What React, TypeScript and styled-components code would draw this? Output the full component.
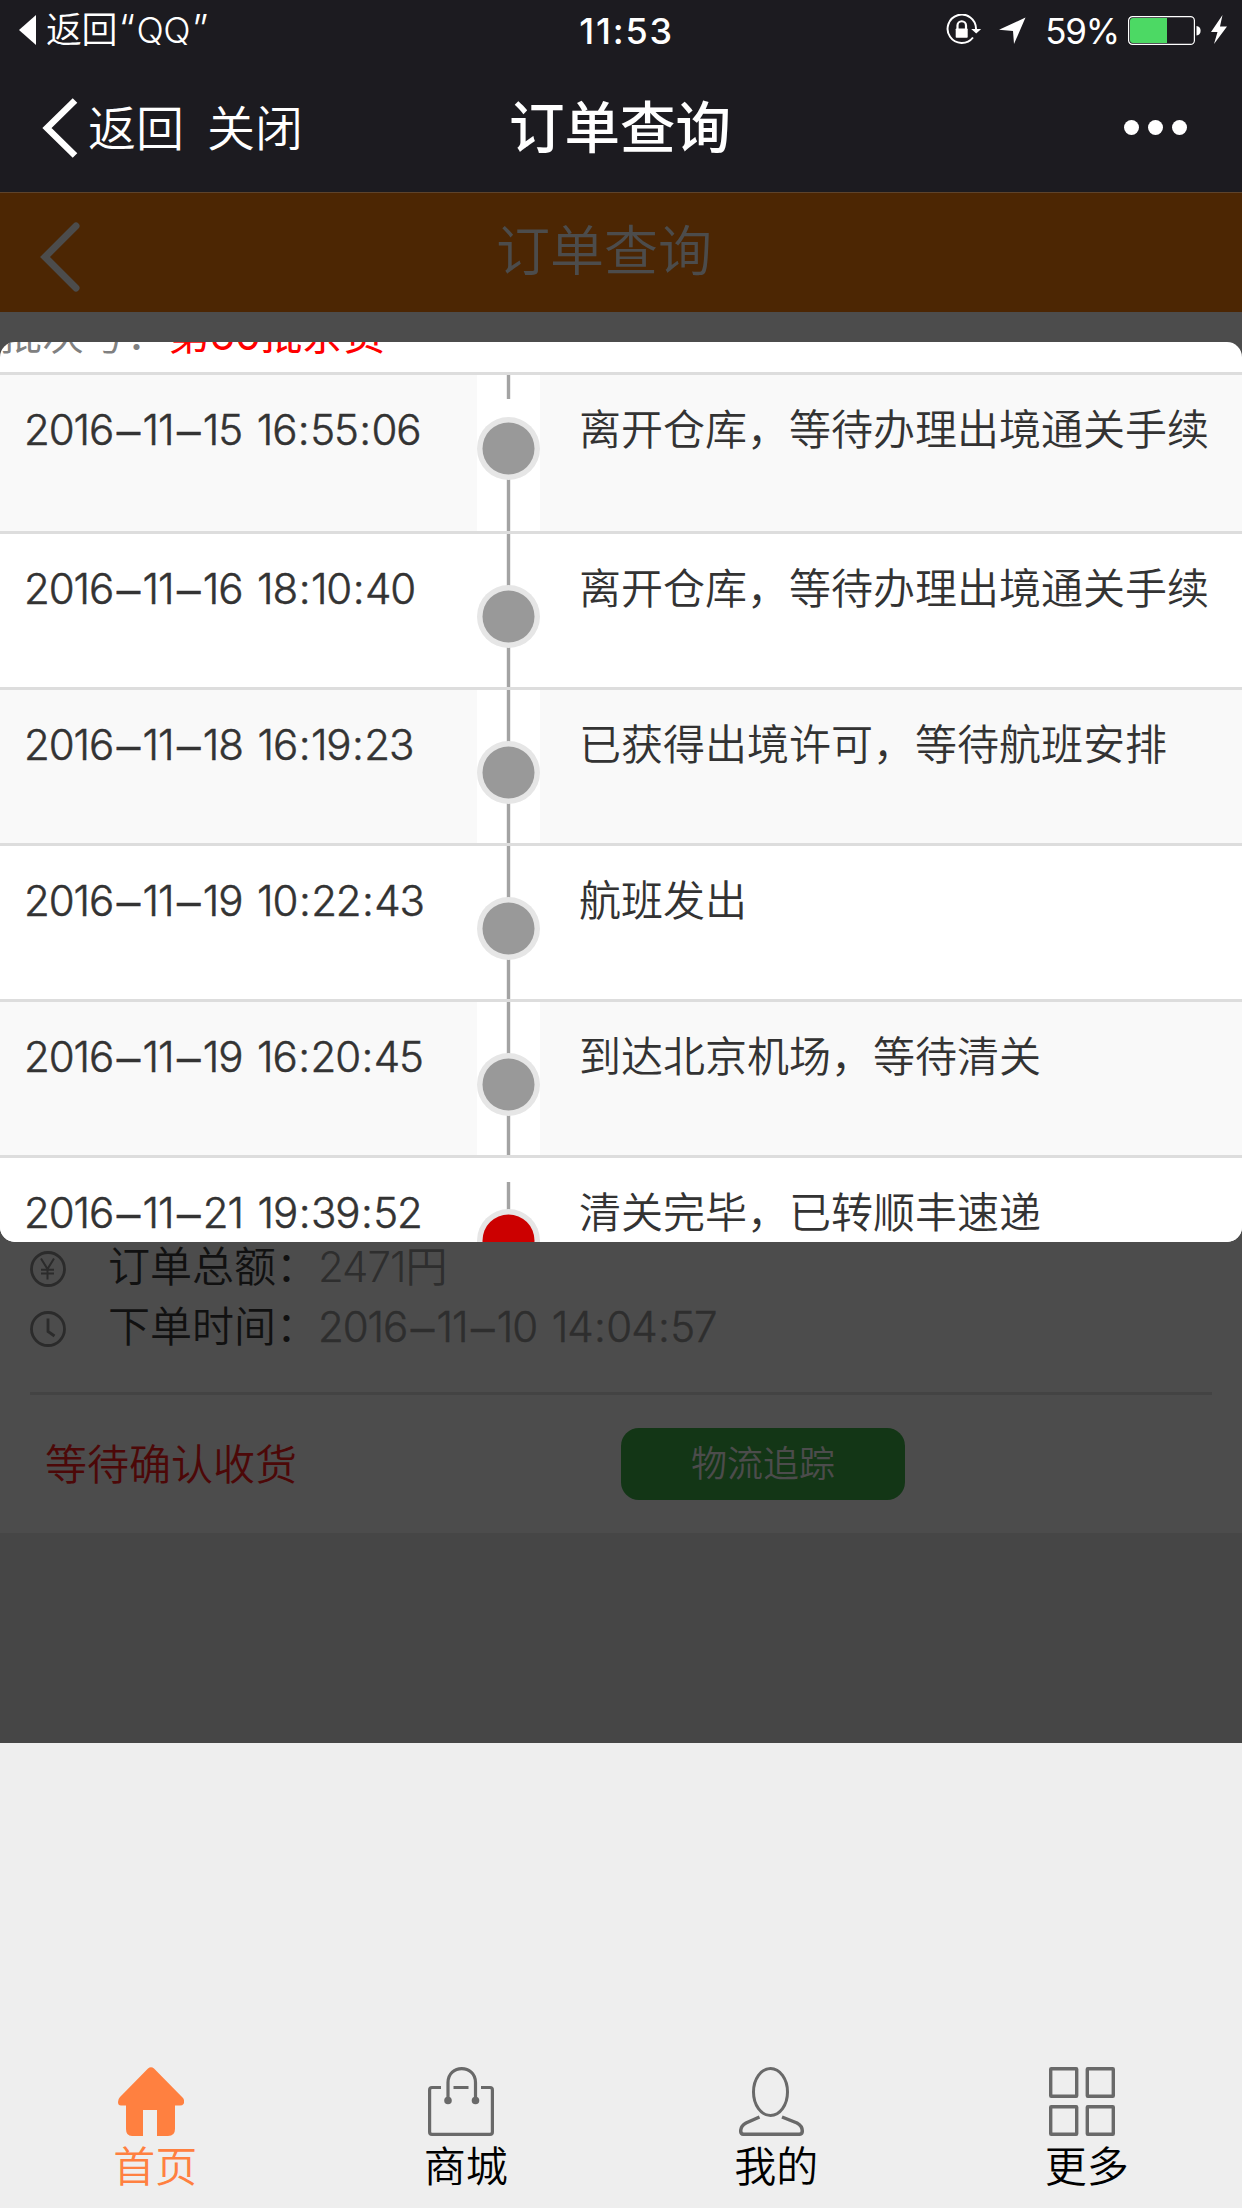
import React from 'react';
import styled, { createGlobalStyle, css } from 'styled-components';

const GlobalStyle = createGlobalStyle`
  * { box-sizing: border-box; }
  body {
    margin: 0;
    background: #eeeeee;
    font-family: Inter, "Noto Sans CJK SC", sans-serif;
    font-weight: 350;
  }
`;

const Screen = styled.div`
  width: 1242px;
  height: 2208px;
  overflow: hidden;
  display: flex;
  flex-direction: column;
  background: #eeeeee;
`;

const TopChrome = styled.header`
  height: 192px;
  flex: none;
  background: #1c1b20;
  color: #fff;
`;

const StatusBar = styled.div`
  height: 60px;
  display: grid;
  grid-template-columns: 1fr auto 1fr;
  align-items: center;
  padding: 0 15px 0 19px;
  font-size: 36px;
`;

const StatusBack = styled.div`
  display: flex;
  align-items: center;
  gap: 10px;
  height: 58px;
  line-height: 58px;
  letter-spacing: -0.6px;
`;

const Quote = styled.span`
  font-size: 40px;
  line-height: 40px;
  margin: 0 2px;
`;

const Clock = styled.div`
  font-weight: 550;
  font-size: 36px;
  letter-spacing: 1.8px;
  padding: 2px 0 0 7px;
`;

const StatusRight = styled.div`
  display: flex;
  align-items: center;
  justify-content: flex-end;
  height: 60px;
`;

const Percent = styled.span`
  font-size: 35px;
  font-weight: 400;
  line-height: 60px;
  padding-top: 2px;
  margin: 0 9px 0 18px;
  letter-spacing: -1.2px;
`;

const NavBar = styled.nav`
  height: 132px;
  display: grid;
  grid-template-columns: 1fr auto 1fr;
  align-items: center;
  padding: 0 42px;
`;

const NavActions = styled.div`
  display: flex;
  align-items: center;
  font-size: 48px;
  line-height: 132px;
`;

const NavLink = styled.span<{ $gap: number }>`
  margin-left: ${(p) => p.$gap}px;
  padding-top: 3px;
`;

const NavTitle = styled.h1`
  margin: 0 2px 0 0;
  font-size: 55.5px;
  font-weight: 500;
  line-height: 130px;
`;

const MoreDots = styled.div`
  display: flex;
  justify-content: flex-end;
  gap: 9px;
  margin-right: 13px;
`;

const Dot = styled.i`
  width: 15px;
  height: 15px;
  border-radius: 50%;
  background: #fff;
`;

const Page = styled.main`
  position: relative;
  height: 1551px;
  flex: none;
  background: #464646;
  display: flex;
  flex-direction: column;
`;

const PageHeader = styled.div`
  height: 120px;
  flex: none;
  border-top: 1px solid #5e432b;
  background: #4c2603;
  color: #4c4c4c;
  display: flex;
  align-items: center;
  padding-left: 40px;

  svg { margin-top: 8px; }
`;

const PageTitle = styled.h2`
  margin: 0 0 0 416px;
  padding-bottom: 1px;
  font-size: 54px;
  line-height: 110px;
  font-weight: 350;
`;

const OrderCard = styled.section`
  height: 1221px;
  flex: none;
  background: #4c4c4c;
  display: flex;
  flex-direction: column;
  justify-content: flex-end;
`;

const OrderLine = styled.div`
  height: 60px;
  display: flex;
  align-items: center;
  padding-left: 30px;
  font-size: 42px;
  line-height: 60px;

  svg { margin-top: 5px; }
`;

const OrderLabel = styled.span`
  width: 210px;
  margin-left: 42px;
  padding-top: 2px;
  color: #111;
  white-space: nowrap;
`;

const OrderValue = styled.span`
  padding-top: 2px;
  color: #2e2e2e;
  letter-spacing: -1px;
`;

const OrderFooter = styled.div`
  height: 141px;
  margin: 36px 30px 0;
  border-top: 3px solid #434343;
  display: flex;
  align-items: center;
`;

const OrderState = styled.span`
  width: 591px;
  padding: 0 0 5px 15px;
  font-size: 42px;
  color: #4c0808;
`;

const TrackButton = styled.button`
  width: 284px;
  height: 72px;
  padding: 0 0 6px;
  border: 0;
  border-radius: 18px;
  background: #133616;
  color: #4c4c4c;
  font: inherit;
  font-size: 36px;
`;

const Modal = styled.section`
  position: absolute;
  left: 0;
  top: 150px;
  width: 100%;
  height: 900px;
  border-radius: 15px;
  overflow: hidden;
  background: #fff;
  color: #333;
  font-size: 42px;
  display: flex;
  flex-direction: column;
`;

const BatchLine = styled.div`
  height: 30px;
  flex: none;
  display: flex;
  align-items: flex-end;
  padding-bottom: 7px;
  line-height: 60px;
  color: #808080;
  white-space: nowrap;
`;

const BatchNumber = styled.span`
  color: #f00;
  font-weight: 400;
  letter-spacing: -0.7px;
`;

const Row = styled.div<{ $striped: boolean; $height: number }>`
  height: ${(p) => p.$height}px;
  flex: none;
  border-top: 3px solid #ddd;
  display: grid;
  grid-template-columns: 477px 63px 1fr;
  background: ${(p) => (p.$striped ? '#f9f9f9' : '#fff')};
`;

const cellText = css`
  line-height: 60px;
  padding-top: 25px;
  white-space: nowrap;
`;

const Time = styled.div`
  ${cellText}
  padding-left: 24px;
`;

const Event = styled.div`
  ${cellText}
  padding-left: 39px;
`;

const Stamp = styled.span`
  font-weight: 300;
  -webkit-text-stroke: 0.5px currentColor;
  letter-spacing: -1.1px;
  word-spacing: 4px;
`;

const Dash = styled.span`
  font-size: 47px;
  line-height: 30px;
  vertical-align: -3px;
  margin: 0 3.5px;
`;

const Colon = styled.span`
  margin: 0 1.5px;
`;

const Rail = styled.div`
  background: #fff;
  overflow: hidden;
`;

const TabBar = styled.footer`
  margin-top: auto;
  height: 141px;
  display: grid;
  grid-template-columns: repeat(4, 1fr);
`;

const Tab = styled.div<{ $active?: boolean }>`
  display: flex;
  flex-direction: column;
  align-items: center;
  color: ${(p) => (p.$active ? '#ff8040' : '#000')};
  font-size: 42px;
  line-height: 62px;

  svg { margin-right: 9px; }
`;

type MarkerKind = 'first' | 'middle' | 'last';

const Marker = ({ kind, height }: { kind: MarkerKind; height: number }) => {
  const cy = kind === 'first' ? 73.5 : 82.5;
  return (
    <svg width="63" height={height} viewBox={`0 0 63 ${height}`} display="block">
      {kind === 'first' && <path d={`M31.5 0V24M31.5 100V${height}`} stroke="#a3a3a3" strokeWidth="3.4" />}
      {kind === 'middle' && <path d={`M31.5 0V${height}`} stroke="#a3a3a3" strokeWidth="3.4" />}
      {kind === 'last' && <path d={`M31.5 24V${height}`} stroke="#a3a3a3" strokeWidth="3.4" />}
      <circle cx="31.5" cy={cy} r="31.5" fill="#e6e6e6" />
      <circle cx="31.5" cy={cy} r="26" fill={kind === 'last' ? '#cc0000' : '#999'} />
    </svg>
  );
};

const Timestamp = ({ value }: { value: string }) => (
  <Stamp>
    {value.split(/([–:])/).map((part, i) => {
      if (part === '–') return <Dash key={i}>{part}</Dash>;
      if (part === ':') return <Colon key={i}>{part}</Colon>;
      return part;
    })}
  </Stamp>
);

const events: { time: string; text: string; kind: MarkerKind }[] = [
  { time: '2016–11–15 16:55:06', text: '离开仓库，等待办理出境通关手续', kind: 'first' },
  { time: '2016–11–16 18:10:40', text: '离开仓库，等待办理出境通关手续', kind: 'middle' },
  { time: '2016–11–18 16:19:23', text: '已获得出境许可，等待航班安排', kind: 'middle' },
  { time: '2016–11–19 10:22:43', text: '航班发出', kind: 'middle' },
  { time: '2016–11–19 16:20:45', text: '到达北京机场，等待清关', kind: 'middle' },
  { time: '2016–11–21 19:39:52', text: '清关完毕，已转顺丰速递', kind: 'last' },
];

const StatusIcons = () => (
  <svg width="82" height="32" viewBox="0 0 82 32" fill="none">
    <path d="M28 23.500A14.200 14.200 0 1 1 31 15" stroke="#fff" strokeWidth="2" />
    <path d="M26.200 15H36.200L31.200 19.500Z" fill="#fff" />
    <path d="M12.500 15V11.500A4.200 4.200 0 0 1 21 11.500V15" stroke="#fff" strokeWidth="2.200" />
    <rect x="10.700" y="14.500" width="12" height="9.300" rx="0.800" fill="#fff" />
    <path d="M80.500 3.500L54 15.800L68 17L69 30Z" fill="#fff" />
  </svg>
);

const Battery = () => (
  <svg width="99" height="32" viewBox="0 0 99 32">
    <rect x="0.600" y="2.600" width="65.800" height="27.800" rx="4" fill="none" stroke="#fff" strokeWidth="1.200" />
    <path d="M5 4H39V29H5Q2 29 2 26V7Q2 4 5 4Z" fill="#4cd964" />
    <path d="M68.500 12C74 12 74 21.500 68.500 21.500Z" fill="#fff" />
    <path d="M94.500 1L83 18H89.500L86 30L99 12.500H92Z" fill="#fff" />
  </svg>
);

export default function App() {
  return (
    <>
      <GlobalStyle />
      <Screen>
        <TopChrome>
          <StatusBar>
            <StatusBack>
              <svg width="17" height="30" viewBox="0 0 17 30"><path d="M17 0V30L0 15Z" fill="#fff" /></svg>
              <span>返回<Quote>“</Quote>QQ<Quote>”</Quote></span>
            </StatusBack>
            <Clock>11:53</Clock>
            <StatusRight>
              <StatusIcons />
              <Percent>59%</Percent>
              <Battery />
            </StatusRight>
          </StatusBar>
          <NavBar>
            <NavActions>
              <svg width="36" height="60" viewBox="0 0 36 60" fill="none">
                <path d="M33 2.500L5 30L33 57.500" stroke="#fff" strokeWidth="6.500" />
              </svg>
              <NavLink $gap={10}>返回</NavLink>
              <NavLink $gap={23}>关闭</NavLink>
            </NavActions>
            <NavTitle>订单查询</NavTitle>
            <MoreDots><Dot /><Dot /><Dot /></MoreDots>
          </NavBar>
        </TopChrome>

        <Page>
          <PageHeader>
            <svg width="40" height="70" viewBox="0 0 40 70" fill="none">
              <path d="M36 4L5 35L36 66" stroke="#4c4c4c" strokeWidth="7" strokeLinecap="round" />
            </svg>
            <PageTitle>订单查询</PageTitle>
          </PageHeader>

          <OrderCard>
            <OrderLine>
              <svg width="36" height="36" viewBox="0 0 36 36" fill="none" stroke="#2b2b2b" strokeWidth="2.800">
                <circle cx="18" cy="18" r="16.500" />
                <path d="M11 7.500L17.500 18L24 7.500M17.500 18V28.500M11 18.800H24M11 22.500H24" strokeWidth="2" />
              </svg>
              <OrderLabel>订单总额：</OrderLabel>
              <OrderValue>2471円</OrderValue>
            </OrderLine>
            <OrderLine>
              <svg width="36" height="36" viewBox="0 0 36 36" fill="none" stroke="#2b2b2b" strokeWidth="2.800">
                <circle cx="18" cy="18" r="16.500" />
                <path d="M18 7.500V20.500L24.500 25" />
              </svg>
              <OrderLabel>下单时间：</OrderLabel>
              <OrderValue><Timestamp value="2016–11–10 14:04:57" /></OrderValue>
            </OrderLine>
            <OrderFooter>
              <OrderState>等待确认收货</OrderState>
              <TrackButton>物流追踪</TrackButton>
            </OrderFooter>
          </OrderCard>

          <Modal>
            <BatchLine>
              <span>批次号：</span>
              <BatchNumber>第60批杂货</BatchNumber>
            </BatchLine>
            {events.map((e, i) => {
              const height = i === 0 ? 159 : 156;
              return (
                <Row key={e.time} $striped={i % 2 === 0} $height={height}>
                  <Time><Timestamp value={e.time} /></Time>
                  <Rail><Marker kind={e.kind} height={height - 3} /></Rail>
                  <Event>{e.text}</Event>
                </Row>
              );
            })}
          </Modal>
        </Page>

        <TabBar>
          <Tab $active>
            <svg width="66" height="69" viewBox="0 0 66 69" fill="#ff8040">
              <path d="M30 1.500Q33 -1 36 1.500L65 31Q67 34 65.500 37Q64.500 38.500 62 38.500H57V62Q57 69 50 69H39V43H25V69H14Q8 69 8 62V38.500H3Q0 38.500 0 35Q0 32 2 30Z" />
            </svg>
            首页
          </Tab>
          <Tab>
            <svg width="66" height="69" viewBox="0 0 66 69" fill="none" stroke="#696969" strokeWidth="3.200">
              <path d="M13 20.500H4Q1.600 20.500 1.600 23V65Q1.600 67.400 4 67.400H62Q64.400 67.400 64.400 65V23Q64.400 20.500 62 20.500H53M25.500 20.500H40.500" />
              <path d="M20 33V15.500C20 -3 47.500 -3 47.500 15.500V33" />
              <circle cx="20" cy="33.500" r="2.200" fill="#696969" />
              <circle cx="47.500" cy="33.500" r="2.200" fill="#696969" />
            </svg>
            商城
          </Tab>
          <Tab>
            <svg width="66" height="69" viewBox="0 0 66 69" fill="none" stroke="#696969" strokeWidth="3">
              <ellipse cx="31.500" cy="25" rx="17" ry="23.500" />
              <path d="M20.500 50L7 56Q1.700 59 1.700 64Q1.700 67.300 5 67.300H60Q63.300 67.300 63.300 64Q63.300 59 58 56L43 50" strokeWidth="3.500" />
            </svg>
            我的
          </Tab>
          <Tab>
            <svg width="66" height="69" viewBox="0 0 66 69" fill="none" stroke="#696969" strokeWidth="3.400">
              <rect x="1.700" y="1.700" width="26" height="27.500" rx="0.500" />
              <rect x="38.300" y="1.700" width="26" height="27.500" rx="0.500" />
              <rect x="1.700" y="39.800" width="26" height="27.500" rx="0.500" />
              <rect x="38.300" y="39.800" width="26" height="27.500" rx="0.500" />
            </svg>
            更多
          </Tab>
        </TabBar>
      </Screen>
    </>
  );
}
